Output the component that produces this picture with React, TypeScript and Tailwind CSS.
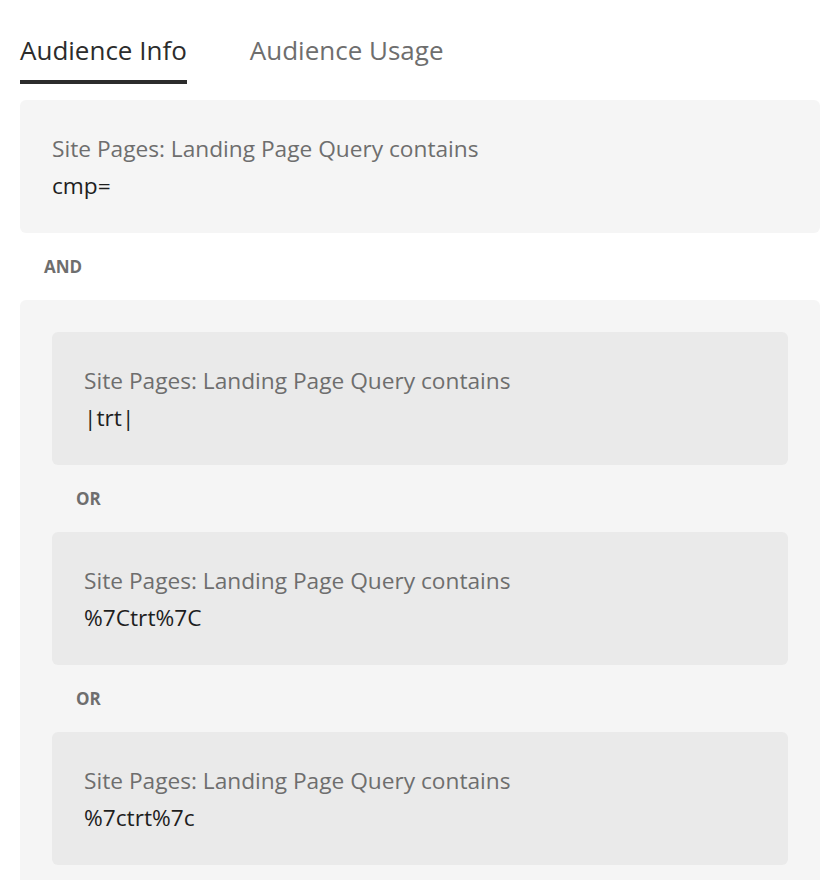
import { useState } from 'react'

const font = { fontFamily: '"Open Sans", "Liberation Sans", sans-serif' }

function Condition({ value, inner }: { value: string; inner?: boolean }) {
  return (
    <div className={`${inner ? 'bg-[#eaeaea]' : 'bg-[#f5f5f5]'} rounded-md h-[133px] px-8 pt-[30px]`}>
      <p className="text-[22.7px] leading-[37px] text-[#6e6e6e]">Site Pages: Landing Page Query contains</p>
      <p className="text-[22.7px] leading-[37px] text-[#1e1e1e]">{value}</p>
    </div>
  )
}

function Operator({ label }: { label: string }) {
  return (
    <div className="h-[67px] flex items-center pl-6">
      <span className="text-[17px] font-bold text-[#6e6e6e]">{label}</span>
    </div>
  )
}

export default function App() {
  const [tab, setTab] = useState(0)
  const tabs = ['Audience Info', 'Audience Usage']

  return (
    <div className="w-[840px] h-[880px] overflow-hidden bg-white px-5" style={font}>
      {/* Tabs */}
      <div className="flex gap-[63px] h-[100px]">
        {tabs.map((t, i) => (
          <button
            key={t}
            onClick={() => setTab(i)}
            className={`relative pt-[15px] text-[26px] leading-[40px] h-[84px] text-left ${tab === i ? 'text-[#2c2c2c]' : 'text-[#6e6e6e]'}`}
          >
            {t}
            {tab === i && <span className="absolute left-0 right-0 top-[80px] h-1 bg-[#2c2c2c]" />}
          </button>
        ))}
      </div>

      <Condition value="cmp=" />
      <Operator label="AND" />

      <div className="bg-[#f5f5f5] rounded-md p-8 pb-10">
        <Condition inner value="|trt|" />
        <Operator label="OR" />
        <Condition inner value="%7Ctrt%7C" />
        <Operator label="OR" />
        <Condition inner value="%7ctrt%7c" />
      </div>
    </div>
  )
}
